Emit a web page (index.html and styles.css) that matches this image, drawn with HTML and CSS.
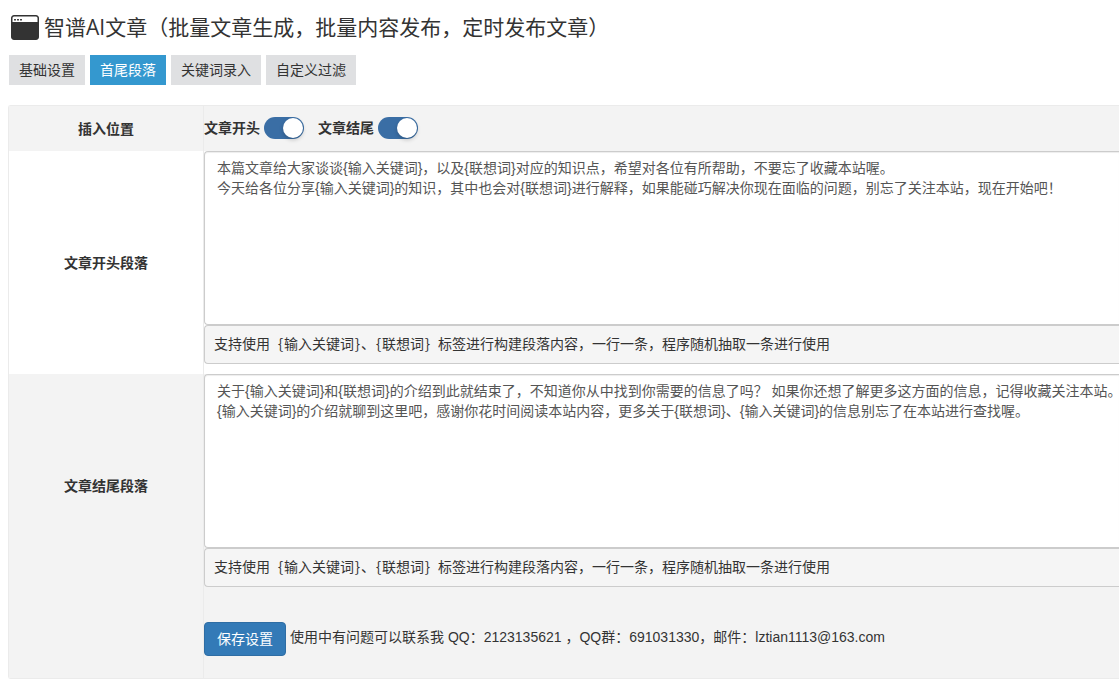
FILE: index.html
```html
<!DOCTYPE html>
<html lang="zh-CN">
<head>
<meta charset="utf-8">
<meta name="viewport" content="width=device-width, initial-scale=1">
<title>智谱AI文章</title>
<link rel="stylesheet" href="styles.css">
</head>
<body>
<header class="page-header">
  <svg class="page-icon" viewBox="0 0 28 25" aria-hidden="true">
    <rect x="0.5" y="0.5" width="27" height="24" rx="2.5" fill="#333" stroke="#333"/>
    <path d="M1.500 7V3Q1.500 1.500 3 1.500H25Q26.500 1.500 26.500 3V7Z" fill="#fff"/>
    <path d="M3 4h2v1.500H3zM6 4h2v1.500H6zM9 4h2v1.500H9z" fill="#444"/>
  </svg>
  <h1 class="page-title">智谱AI文章（批量文章生成，批量内容发布，定时发布文章）</h1>
</header>
<nav class="tabs">
  <a class="tab" href="#base">基础设置</a>
  <a class="tab tab-active" href="#paragraph" aria-current="page">首尾段落</a>
  <a class="tab" href="#keywords">关键词录入</a>
  <a class="tab" href="#filter">自定义过滤</a>
</nav>
<form class="settings">
  <div class="row row-shaded">
    <div class="row-label">插入位置</div>
    <div class="row-body switches">
      <label class="switch-label">文章开头<input class="switch" type="checkbox" checked></label>
      <label class="switch-label">文章结尾<input class="switch" type="checkbox" checked></label>
    </div>
  </div>
  <div class="row">
    <label class="row-label" for="head">文章开头段落</label>
    <div class="row-body">
      <textarea class="editor" id="head" spellcheck="false">本篇文章给大家谈谈{输入关键词}，以及{联想词}对应的知识点，希望对各位有所帮助，不要忘了收藏本站喔。
今天给各位分享{输入关键词}的知识，其中也会对{联想词}进行解释，如果能碰巧解决你现在面临的问题，别忘了关注本站，现在开始吧！</textarea>
      <pre class="hint">支持使用 {输入关键词}、{联想词} 标签进行构建段落内容，一行一条，程序随机抽取一条进行使用</pre>
    </div>
  </div>
  <div class="row row-shaded">
    <label class="row-label" for="tail">文章结尾段落</label>
    <div class="row-body">
      <textarea class="editor" id="tail" spellcheck="false">关于{输入关键词}和{联想词}的介绍到此就结束了，不知道你从中找到你需要的信息了吗？ 如果你还想了解更多这方面的信息，记得收藏关注本站。
{输入关键词}的介绍就聊到这里吧，感谢你花时间阅读本站内容，更多关于{联想词}、{输入关键词}的信息别忘了在本站进行查找喔。</textarea>
      <pre class="hint">支持使用 {输入关键词}、{联想词} 标签进行构建段落内容，一行一条，程序随机抽取一条进行使用</pre>
    </div>
  </div>
  <div class="row row-shaded">
    <div class="row-label"></div>
    <div class="row-body actions">
      <button class="save" type="button">保存设置</button>
      <span class="contact">使用中有问题可以联系我 QQ：2123135621 ，QQ群：691031330，邮件：lztian1113@163.com</span>
    </div>
  </div>
</form>
</body>
</html>
```
FILE: styles.css
```css
* {
  box-sizing: border-box;
}

body {
  margin: 0;
  padding-left: 8px;
  background: #fff;
  color: #333;
  font: 14px/20px "Liberation Sans", "Noto Sans CJK SC", sans-serif;
}

.page-header {
  display: flex;
  align-items: center;
  gap: 5px;
  padding: 12px 0 12px 3px;
}

.page-icon {
  flex: none;
  width: 28px;
  height: 25px;
}

.page-title {
  margin: 0;
  font-family: "Open Sans", "Noto Sans CJK SC", sans-serif;
  font-size: 21px;
  font-weight: 400;
  line-height: 31px;
  white-space: nowrap;
}

.tabs {
  display: flex;
  gap: 5px;
  padding-left: 1px;
  margin-bottom: 20px;
}

.tab {
  padding: 5px 10px;
  background: #dfe0e2;
  color: #333;
  text-decoration: none;
}

.tab-active {
  background: #3498cf;
  color: #fff;
}

.settings {
  border: 1px solid #ebebeb;
  border-right: 0;
  border-radius: 3px 0 0 3px;
}

.row {
  display: grid;
  grid-template-columns: 195px minmax(0, 1fr);
}

.row-shaded {
  background: #f3f3f3;
}

.row-label {
  display: flex;
  align-items: center;
  justify-content: center;
  border-right: 1px solid #ebebeb;
  font-weight: 700;
}

.switches {
  display: flex;
  gap: 14px;
  padding: 11px 0 12px;
}

.switch-label {
  display: flex;
  align-items: center;
  gap: 4px;
  font-weight: 700;
}

.switch {
  appearance: none;
  display: flex;
  justify-content: flex-end;
  width: 40px;
  height: 22px;
  margin: 0;
  padding: 1px;
  border-radius: 11px;
  background: #3a6ea5;
}

.switch::before {
  content: "";
  width: 20px;
  height: 20px;
  border-radius: 50%;
  background: #fff;
  box-shadow: 0 2px 4px rgba(0, 0, 0, 0.2);
}

.editor {
  display: block;
  width: 100%;
  height: 174px;
  padding: 6px 12px;
  border: 1px solid #ccc;
  border-right: 0;
  border-radius: 4px 0 0 4px;
  background: #fff;
  box-shadow: inset 0 1px 1px rgba(0, 0, 0, 0.075);
  color: #555;
  font: inherit;
  white-space: pre;
  overflow: hidden;
  resize: none;
}

.hint {
  margin: 0 0 10px;
  padding: 7px 9px 10px;
  border: 1px solid #ccc;
  border-right: 0;
  border-radius: 4px 0 0 4px;
  background: #f5f5f5;
  font: 14px/20px "Noto Sans Mono CJK SC", "Liberation Mono", "Noto Sans CJK SC", monospace;
}

.actions {
  display: flex;
  align-items: flex-start;
  gap: 4px;
  padding: 25px 0 22px;
}

.save {
  padding: 6px 12px;
  border: 1px solid #2e6da4;
  border-radius: 4px;
  background: #337ab7;
  color: #fff;
  font: inherit;
}

.contact {
  line-height: 30px;
}
```
